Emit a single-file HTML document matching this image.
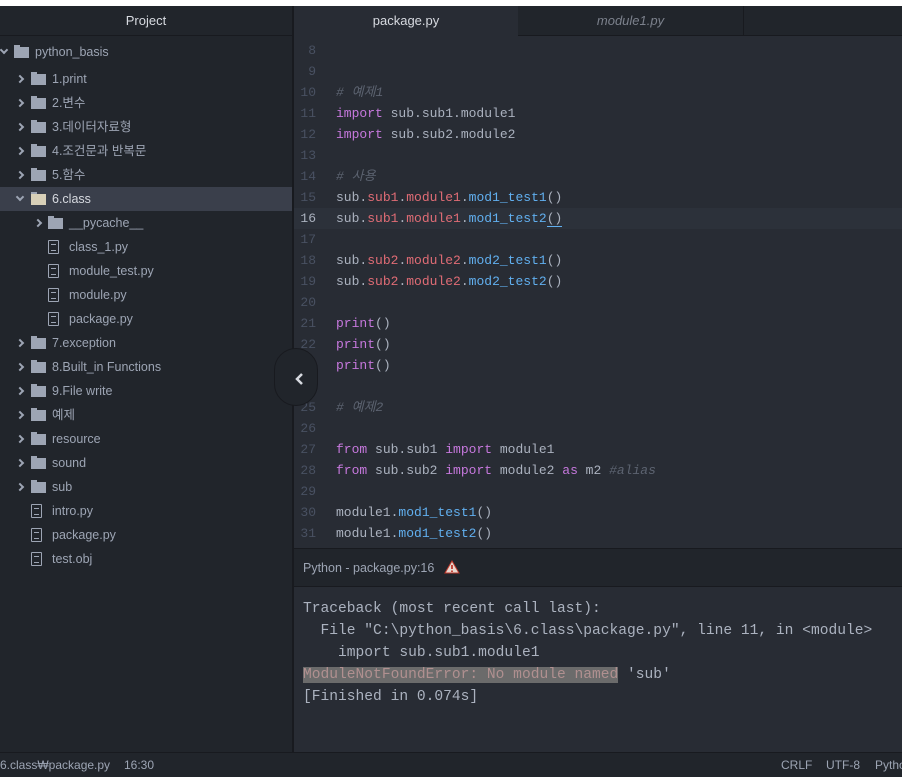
<!DOCTYPE html>
<html><head><meta charset="utf-8"><style>
*{margin:0;padding:0;box-sizing:border-box}
body{width:902px;height:776px;overflow:hidden;background:#21252b;font-family:"Liberation Sans","Noto Sans CJK KR",sans-serif;position:relative;color:#9da5b4}
.top{position:absolute;left:0;top:0;width:902px;height:6px;background:#fff}
.side{position:absolute;left:0;top:6px;width:292px;height:746px;background:#21252b}
.phead{height:30px;line-height:30px;text-align:center;color:#d7dae0;font-size:13px;border-bottom:1px solid #181a1f}
.row{position:absolute;height:24px;line-height:24px;font-size:12.5px;color:#9da5b4;white-space:nowrap;left:0;width:292px}
.row.sel{background:#3a3f4b}
.ch{position:absolute;top:9px;width:6px;height:6px;border-right:2px solid #9da5b4;border-bottom:2px solid #9da5b4;transform:rotate(-45deg)}
.ch.d{transform:rotate(45deg);top:7px}
.fd{position:absolute;top:7px;width:15px;height:11px;background:#9da5b4}
.fd:before{content:"";position:absolute;left:0;top:-2px;width:6px;height:2px;background:#9da5b4}
.fi{position:absolute;top:5px;width:11px;height:14px;border:1.5px solid #9da5b4;border-radius:1px}
.fi:after{content:"";position:absolute;left:2px;top:3px;width:5px;height:5px;border-top:1px solid #9da5b4;border-bottom:1px solid #9da5b4}
.lbl{position:absolute;top:0}
.div{position:absolute;left:292px;top:6px;width:2px;height:746px;background:#181a1f}
.tabs{position:absolute;left:294px;top:6px;width:608px;height:30px;background:#21252b;border-bottom:1px solid #181a1f}
.tab{position:absolute;top:0;height:30px;line-height:30px;text-align:center;font-size:13px}
.ed{position:absolute;left:294px;top:36px;width:608px;height:512px;background:#282c34;font-family:"Liberation Mono","Noto Sans CJK KR",monospace;font-size:13px}
.ln{position:absolute;left:0;width:608px;height:21px;line-height:21px;white-space:pre;color:#abb2bf}
.ln .n{position:absolute;left:0;width:22px;text-align:right;color:#495162}
.ln .c{position:absolute;left:42px}
.cur{background:#2c313a}
.k{color:#c678dd}.r{color:#e06c75}.b{color:#61afef}.cm{color:#5c6370;font-style:italic}
.btn{position:absolute;left:274px;top:348px;width:44px;height:58px;border-radius:29px;background:#21252b;border:1px solid #181a1f}
.ph{position:absolute;left:294px;top:548px;width:608px;height:39px;background:#21252b;border-top:1px solid #181a1f;border-bottom:1px solid #181a1f;font-size:12.5px;line-height:38px;padding-left:9px;color:#9da5b4}
.out{position:absolute;left:294px;top:587px;width:608px;height:165px;background:#282c34;font-family:"Liberation Mono",monospace;font-size:14.6px;color:#abb2bf;padding:11px 0 0 9px;line-height:22px;white-space:pre}
.status{position:absolute;left:0;top:752px;width:902px;height:24px;background:#21252b;border-top:1px solid #181a1f;font-size:12px;line-height:24px;color:#9da5b4}
</style></head><body>
<div class="top"></div>
<div class="side">
<div class="phead">Project</div>
</div>
<div style="position:absolute;left:0;top:0">
<div class="row" style="top:40px"><span class="ch d" style="left:1px"></span><span class="fd" style="left:14px"></span><span class="lbl" style="left:35px">python_basis</span></div>
<div class="row" style="top:67px"><span class="ch" style="left:17px"></span><span class="fd" style="left:31px"></span><span class="lbl" style="left:52px">1.print</span></div>
<div class="row" style="top:91px"><span class="ch" style="left:17px"></span><span class="fd" style="left:31px"></span><span class="lbl" style="left:52px">2.변수</span></div>
<div class="row" style="top:115px"><span class="ch" style="left:17px"></span><span class="fd" style="left:31px"></span><span class="lbl" style="left:52px">3.데이터자료형</span></div>
<div class="row" style="top:139px"><span class="ch" style="left:17px"></span><span class="fd" style="left:31px"></span><span class="lbl" style="left:52px">4.조건문과 반복문</span></div>
<div class="row" style="top:163px"><span class="ch" style="left:17px"></span><span class="fd" style="left:31px"></span><span class="lbl" style="left:52px">5.함수</span></div>
<div class="row sel" style="top:187px"><span class="ch d" style="left:17px"></span><span class="fd" style="left:31px;background:#d8d0b8"></span><span class="lbl" style="left:52px;color:#d7dae0">6.class</span></div>
<div class="row" style="top:211px"><span class="ch" style="left:35px"></span><span class="fd" style="left:48px"></span><span class="lbl" style="left:69px">__pycache__</span></div>
<div class="row" style="top:235px"><span class="fi" style="left:48px"></span><span class="lbl" style="left:69px">class_1.py</span></div>
<div class="row" style="top:259px"><span class="fi" style="left:48px"></span><span class="lbl" style="left:69px">module_test.py</span></div>
<div class="row" style="top:283px"><span class="fi" style="left:48px"></span><span class="lbl" style="left:69px">module.py</span></div>
<div class="row" style="top:307px"><span class="fi" style="left:48px"></span><span class="lbl" style="left:69px">package.py</span></div>
<div class="row" style="top:331px"><span class="ch" style="left:17px"></span><span class="fd" style="left:31px"></span><span class="lbl" style="left:52px">7.exception</span></div>
<div class="row" style="top:355px"><span class="ch" style="left:17px"></span><span class="fd" style="left:31px"></span><span class="lbl" style="left:52px">8.Built_in Functions</span></div>
<div class="row" style="top:379px"><span class="ch" style="left:17px"></span><span class="fd" style="left:31px"></span><span class="lbl" style="left:52px">9.File write</span></div>
<div class="row" style="top:403px"><span class="ch" style="left:17px"></span><span class="fd" style="left:31px"></span><span class="lbl" style="left:52px">예제</span></div>
<div class="row" style="top:427px"><span class="ch" style="left:17px"></span><span class="fd" style="left:31px"></span><span class="lbl" style="left:52px">resource</span></div>
<div class="row" style="top:451px"><span class="ch" style="left:17px"></span><span class="fd" style="left:31px"></span><span class="lbl" style="left:52px">sound</span></div>
<div class="row" style="top:475px"><span class="ch" style="left:17px"></span><span class="fd" style="left:31px"></span><span class="lbl" style="left:52px">sub</span></div>
<div class="row" style="top:499px"><span class="fi" style="left:31px"></span><span class="lbl" style="left:52px">intro.py</span></div>
<div class="row" style="top:523px"><span class="fi" style="left:31px"></span><span class="lbl" style="left:52px">package.py</span></div>
<div class="row" style="top:547px"><span class="fi" style="left:31px"></span><span class="lbl" style="left:52px">test.obj</span></div>
</div>
<div class="div"></div>
<div class="tabs">
<div class="tab" style="left:0;width:224px;background:#282c34;color:#d7dae0;height:31px">package.py</div>
<div class="tab" style="left:224px;width:226px;color:#7c818c;font-style:italic;border-right:1px solid #181a1f">module1.py</div>
</div>
<div class="ed">
<div class="ln" style="top:4px"><span class="n">8</span></div>
<div class="ln" style="top:25px"><span class="n">9</span></div>
<div class="ln" style="top:46px"><span class="n">10</span><span class="c cm"># 예제1</span></div>
<div class="ln" style="top:67px"><span class="n">11</span><span class="c"><span class="k">import</span> sub.sub1.module1</span></div>
<div class="ln" style="top:88px"><span class="n">12</span><span class="c"><span class="k">import</span> sub.sub2.module2</span></div>
<div class="ln" style="top:109px"><span class="n">13</span></div>
<div class="ln" style="top:130px"><span class="n">14</span><span class="c cm"># 사용</span></div>
<div class="ln" style="top:151px"><span class="n">15</span><span class="c">sub.<span class="r">sub1</span>.<span class="r">module1</span>.<span class="b">mod1_test1</span>()</span></div>
<div class="ln cur" style="top:172px"><span class="n" style="color:#abb2bf">16</span><span class="c">sub.<span class="r">sub1</span>.<span class="r">module1</span>.<span class="b">mod1_test2</span><span style="border-bottom:1px solid #61afef">()</span></span></div>
<div class="ln" style="top:193px"><span class="n">17</span></div>
<div class="ln" style="top:214px"><span class="n">18</span><span class="c">sub.<span class="r">sub2</span>.<span class="r">module2</span>.<span class="b">mod2_test1</span>()</span></div>
<div class="ln" style="top:235px"><span class="n">19</span><span class="c">sub.<span class="r">sub2</span>.<span class="r">module2</span>.<span class="b">mod2_test2</span>()</span></div>
<div class="ln" style="top:256px"><span class="n">20</span></div>
<div class="ln" style="top:277px"><span class="n">21</span><span class="c"><span class="k">print</span>()</span></div>
<div class="ln" style="top:298px"><span class="n">22</span><span class="c"><span class="k">print</span>()</span></div>
<div class="ln" style="top:319px"><span class="n">23</span><span class="c"><span class="k">print</span>()</span></div>
<div class="ln" style="top:340px"><span class="n">24</span></div>
<div class="ln" style="top:361px"><span class="n">25</span><span class="c cm"># 예제2</span></div>
<div class="ln" style="top:382px"><span class="n">26</span></div>
<div class="ln" style="top:403px"><span class="n">27</span><span class="c"><span class="k">from</span> sub.sub1 <span class="k">import</span> module1</span></div>
<div class="ln" style="top:424px"><span class="n">28</span><span class="c"><span class="k">from</span> sub.sub2 <span class="k">import</span> module2 <span class="k">as</span> m2 <span class="cm">#alias</span></span></div>
<div class="ln" style="top:445px"><span class="n">29</span></div>
<div class="ln" style="top:466px"><span class="n">30</span><span class="c">module1.<span class="b">mod1_test1</span>()</span></div>
<div class="ln" style="top:487px"><span class="n">31</span><span class="c">module1.<span class="b">mod1_test2</span>()</span></div>
</div>
<div class="btn"><svg width="44" height="58" style="position:absolute;left:0;top:0"><path d="M27 25 L22 30 L27 35" stroke="#d7dae0" stroke-width="2.5" fill="none"/></svg></div>
<div class="ph">Python - package.py:16 <svg width="16" height="14" style="vertical-align:-2px;margin-left:6px"><path d="M8 1 L15 13 L1 13Z" fill="#e8d8d0" stroke="#c0392b" stroke-width="1"/><path d="M8 5 V9 M8 10.5 V12" stroke="#c0392b" stroke-width="1.8"/></svg></div>
<div class="out">Traceback (most recent call last):
  File "C:\python_basis\6.class\package.py", line 11, in &lt;module&gt;
    import sub.sub1.module1
<span style="background:#6b6b6b;color:#b09090">ModuleNotFoundError: No module named</span> 'sub'
[Finished in 0.074s]</div>
<div class="status"><span style="position:absolute;left:0">6.class₩package.py</span><span style="position:absolute;left:124px">16:30</span><span style="position:absolute;left:781px">CRLF</span><span style="position:absolute;left:826px">UTF-8</span><span style="position:absolute;left:875px">Python</span></div>
</body></html>
